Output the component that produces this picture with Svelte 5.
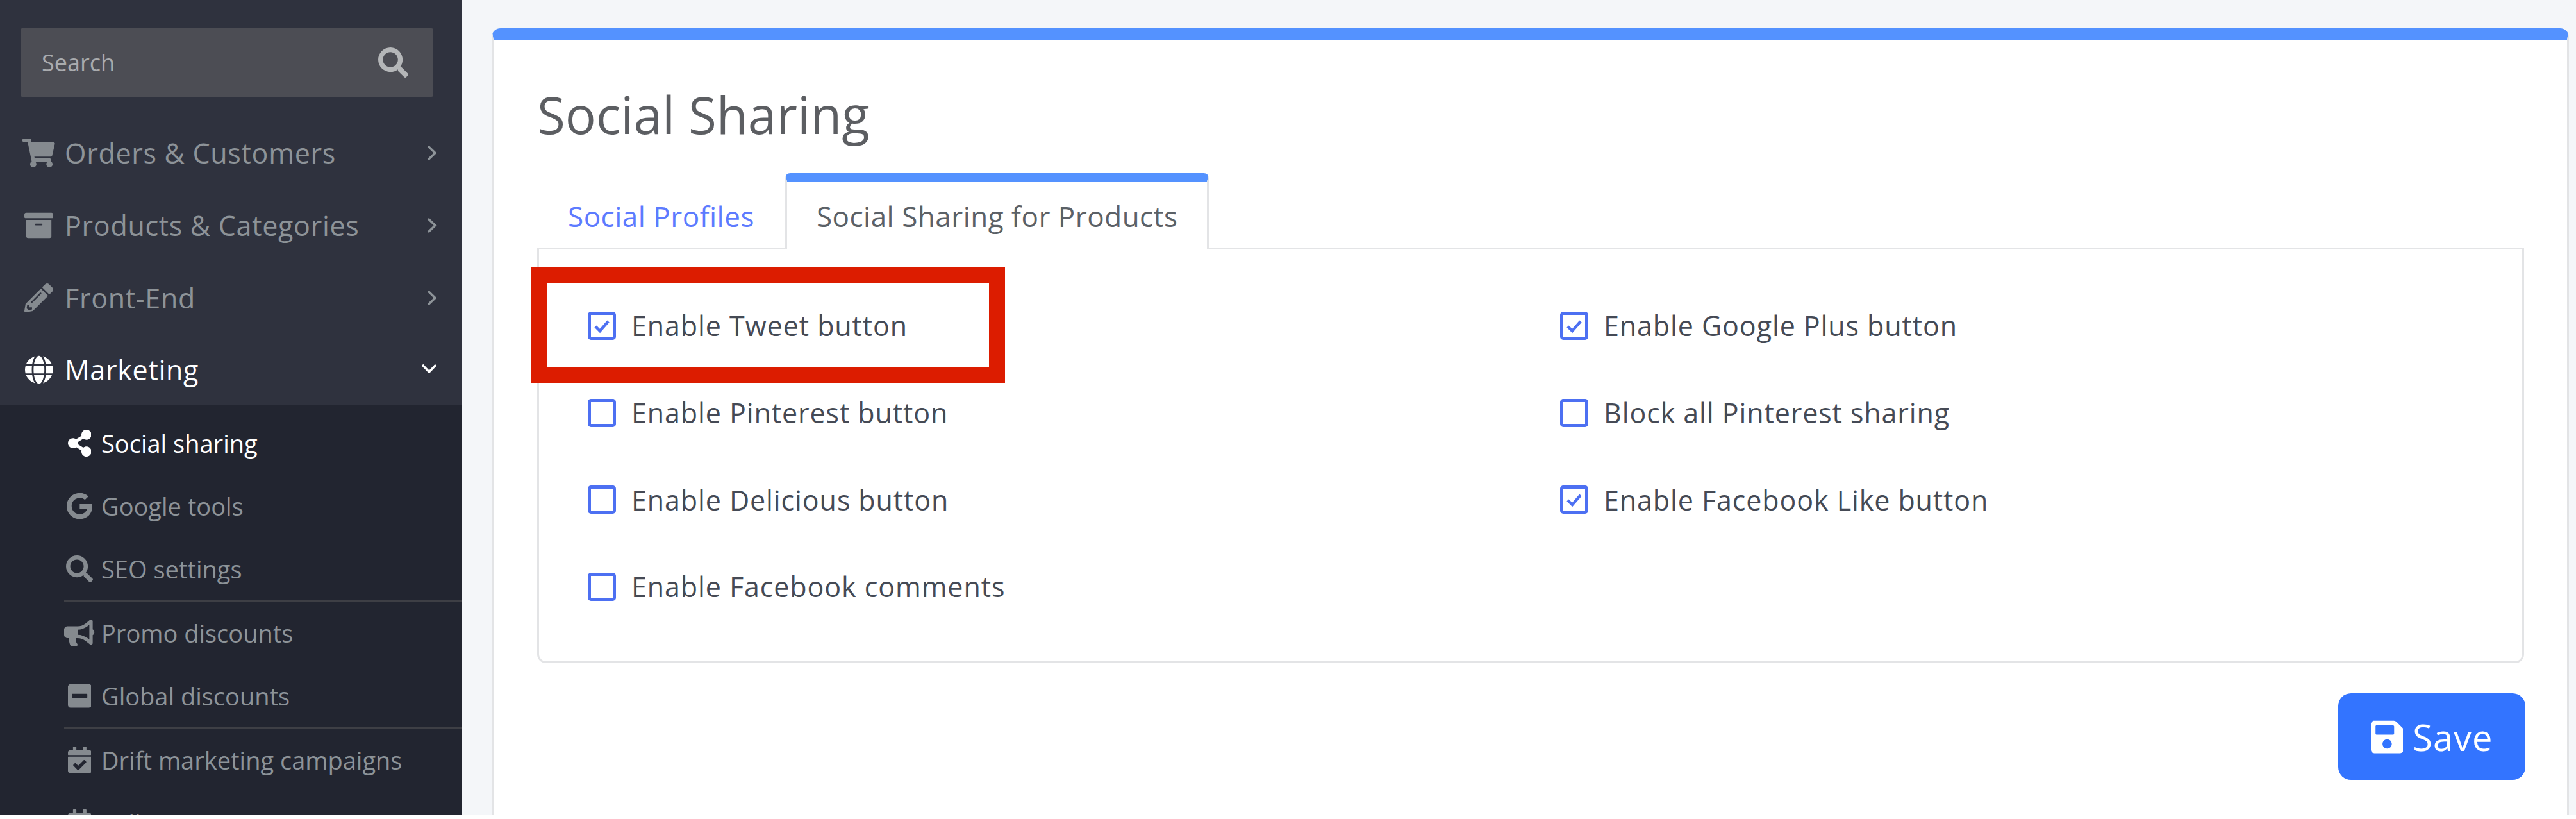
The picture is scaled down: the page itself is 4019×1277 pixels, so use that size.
<script>
  const icons = {
    search: [512, "M505 442.7L405.3 343c-4.5-4.5-10.6-7-17-7H372c27.6-35.3 44-79.7 44-128C416 93.1 322.9 0 208 0S0 93.1 0 208s93.1 208 208 208c48.3 0 92.7-16.4 128-44v16.3c0 6.4 2.5 12.5 7 17l99.7 99.7c9.4 9.4 24.6 9.4 33.9 0l28.3-28.3c9.4-9.4 9.4-24.6.1-34zM208 336c-70.7 0-128-57.2-128-128 0-70.7 57.2-128 128-128 70.7 0 128 57.2 128 128 0 70.7-57.2 128-128 128z"],
    cart: [576, "M528.12 301.319l47.273-208C578.806 78.301 567.391 64 551.99 64H159.208l-9.166-44.81C147.758 8.021 137.93 0 126.529 0H24C10.745 0 0 10.745 0 24v16c0 13.255 10.745 24 24 24h69.883l70.248 343.435C147.325 417.1 136 435.222 136 456c0 30.928 25.072 56 56 56s56-25.072 56-56c0-15.674-6.447-29.835-16.824-40h209.647C430.447 426.165 424 440.326 424 456c0 30.928 25.072 56 56 56s56-25.072 56-56c0-22.172-12.888-41.332-31.579-50.405l5.517-24.276c3.413-15.018-8.002-29.319-23.403-29.319H218.117l-6.545-32h293.145c11.206 0 20.92-7.754 23.403-18.681z"],
    archive: [512, "M32 448c0 17.7 14.3 32 32 32h384c17.7 0 32-14.3 32-32V160H32v288zm160-212c0-6.6 5.4-12 12-12h104c6.6 0 12 5.4 12 12v8c0 6.6-5.4 12-12 12H204c-6.6 0-12-5.4-12-12v-8zM480 32H32C14.3 32 0 46.3 0 64v48c0 8.8 7.2 16 16 16h480c8.8 0 16-7.2 16-16V64c0-17.7-14.3-32-32-32z"],
    pencil: [512, "M497.9 142.1l-46.1 46.1c-4.7 4.7-12.3 4.7-17 0l-111-111c-4.7-4.7-4.7-12.3 0-17l46.1-46.1c18.7-18.7 49.1-18.7 67.9 0l60.1 60.1c18.8 18.7 18.8 49.1 0 67.9zM284.2 99.8L21.6 362.4.4 483.9c-2.9 16.4 11.4 30.6 27.8 27.8l121.5-21.3 262.6-262.6c4.7-4.7 4.7-12.3 0-17l-111-111c-4.8-4.7-12.4-4.7-17.1 0zM124.1 339.9c-5.5-5.5-5.5-14.3 0-19.8l154-154c5.5-5.5 14.3-5.5 19.8 0s5.5 14.3 0 19.8l-154 154c-5.5 5.5-14.3 5.5-19.8 0zM88 424h48v36.3l-64.5 11.3-31.1-31.1L51.7 376H88v48z"],
    globe: [496, "M336.5 160C322 70.7 287.8 8 248 8s-74 62.7-88.5 152h177zM152 256c0 22.2 1.2 43.5 3.3 64h185.3c2.1-20.5 3.3-41.8 3.3-64s-1.2-43.5-3.3-64H155.3c-2.1 20.5-3.3 41.8-3.3 64zm324.7-96c-28.6-67.9-86.5-120.4-158-141.6 24.4 33.8 41.2 84.7 50 141.6h108zM177.2 18.4C105.8 39.6 47.8 92.1 19.3 160h108c8.7-56.9 25.5-107.8 49.9-141.6zM487.4 192H372.7c2.1 21 3.3 42.5 3.3 64s-1.2 43-3.3 64h114.6c5.5-20.5 8.6-41.8 8.6-64s-3.1-43.5-8.5-64zM120 256c0-21.5 1.2-43 3.3-64H8.6C3.2 212.5 0 233.8 0 256s3.2 43.5 8.6 64h114.6c-2-21-3.2-42.5-3.2-64zm39.5 96c14.5 89.3 48.7 152 88.5 152s74-62.7 88.5-152h-177zm159.3 141.6c71.4-21.2 129.4-73.7 158-141.6h-108c-8.8 56.9-25.6 107.8-50 141.6zM19.3 352c28.6 67.9 86.5 120.4 158 141.6-24.4-33.8-41.2-84.7-50-141.6h-108z"],
    share: [448, "M352 320c-22.608 0-43.387 7.819-59.79 20.895l-102.486-64.054a96.551 96.551 0 0 0 0-41.683l102.486-64.054C308.613 184.181 329.392 192 352 192c53.019 0 96-42.981 96-96S405.019 0 352 0s-96 42.981-96 96c0 7.158.79 14.13 2.276 20.841L155.79 180.895C139.387 167.819 118.608 160 96 160c-53.019 0-96 42.981-96 96s42.981 96 96 96c22.608 0 43.387-7.819 59.79-20.895l102.486 64.054A96.301 96.301 0 0 0 256 416c0 53.019 42.981 96 96 96s96-42.981 96-96-42.981-96-96-96z"],
    google: [488, "M488 261.8C488 403.3 391.1 504 248 504 110.8 504 0 393.2 0 256S110.8 8 248 8c66.8 0 123 24.5 166.3 64.9l-67.5 64.9C258.5 52.6 94.3 116.6 94.3 256c0 86.5 69.1 156.6 153.7 156.6 98.2 0 135-70.4 140.8-106.9H248v-85.3h236.1c2.3 12.7 3.9 24.9 3.9 41.4z"],
    bullhorn: [576, "M576 240c0-23.63-12.95-44.04-32-55.12V32.01C544 23.26 537.02 0 512 0c-7.12 0-14.19 2.38-19.98 7.02l-85.03 68.03C364.28 109.19 310.66 128 256 128H64c-35.35 0-64 28.65-64 64v96c0 35.35 28.65 64 64 64h33.7c-1.39 10.48-2.18 21.14-2.18 32 0 39.77 9.26 77.35 25.56 110.94 5.19 10.69 16.52 17.06 28.4 17.06h74.28c26.05 0 41.69-29.84 25.9-50.56-16.4-21.52-26.15-48.36-26.15-77.44 0-11.11 1.62-21.79 4.41-32H256c54.66 0 108.28 18.81 150.98 52.95l85.03 68.03a32.023 32.023 0 0 0 19.98 7.02c24.92 0 32-22.78 32-32V295.13C563.05 284.04 576 263.63 576 240zm-96 141.42l-33.05-26.44C392.95 311.78 325.12 288 256 288v-96c69.12 0 136.95-23.78 190.95-66.98L480 98.58v282.84z"],
    minus: [448, "M400 32H48C21.5 32 0 53.5 0 80v352c0 26.5 21.5 48 48 48h352c26.5 0 48-21.5 48-48V80c0-26.5-21.5-48-48-48zM92 296c-6.6 0-12-5.4-12-12v-56c0-6.6 5.4-12 12-12h264c6.6 0 12 5.4 12 12v56c0 6.6-5.4 12-12 12H92z"],
    calendar: [448, "M436 160H12c-6.627 0-12-5.373-12-12v-36c0-26.51 21.49-48 48-48h48V12c0-6.627 5.373-12 12-12h40c6.627 0 12 5.373 12 12v52h128V12c0-6.627 5.373-12 12-12h40c6.627 0 12 5.373 12 12v52h48c26.51 0 48 21.49 48 48v36c0 6.627-5.373 12-12 12zM12 192h424c6.627 0 12 5.373 12 12v260c0 26.51-21.49 48-48 48H48c-26.51 0-48-21.49-48-48V204c0-6.627 5.373-12 12-12zm333.296 95.947l-28.169-28.398c-4.667-4.705-12.265-4.736-16.97-.068L194.12 364.665l-45.98-46.352c-4.667-4.705-12.266-4.736-16.971-.068l-28.397 28.17c-4.705 4.667-4.736 12.265-.068 16.97l82.601 83.269c4.667 4.705 12.265 4.736 16.97.068l142.953-141.805c4.705-4.667 4.736-12.265.068-16.97z"],
    save: [448, "M433.941 129.941l-83.882-83.882A48 48 0 0 0 316.118 32H48C21.49 32 0 53.49 0 80v352c0 26.51 21.49 48 48 48h352c26.51 0 48-21.49 48-48V163.882a48 48 0 0 0-14.059-33.941zM224 416c-35.346 0-64-28.654-64-64 0-35.346 28.654-64 64-64s64 28.654 64 64c0 35.346-28.654 64-64 64zm96-304.52V212c0 6.627-5.373 12-12 12H76c-6.627 0-12-5.373-12-12V108c0-6.627 5.373-12 12-12h228.52c3.183 0 6.235 1.264 8.485 3.515l3.48 3.48A11.996 11.996 0 0 1 320 111.48z"]
  };

  const mainNav = [
    { label: 'Orders & Customers', icon: 'cart' },
    { label: 'Products & Categories', icon: 'archive' },
    { label: 'Front-End', icon: 'pencil' },
    { label: 'Marketing', icon: 'globe', open: true }
  ];

  const subNav = [
    { label: 'Social sharing', icon: 'share', active: true },
    { label: 'Google tools', icon: 'google' },
    { label: 'SEO settings', icon: 'search', divider: true },
    { label: 'Promo discounts', icon: 'bullhorn' },
    { label: 'Global discounts', icon: 'minus', divider: true },
    { label: 'Drift marketing campaigns', icon: 'calendar' },
    { label: 'Follow-up campaigns', icon: 'calendar' }
  ];

  const options = [
    { label: 'Enable Tweet button', checked: true },
    { label: 'Enable Google Plus button', checked: true },
    { label: 'Enable Pinterest button', checked: false },
    { label: 'Block all Pinterest sharing', checked: false },
    { label: 'Enable Delicious button', checked: false },
    { label: 'Enable Facebook Like button', checked: true },
    { label: 'Enable Facebook comments', checked: false }
  ];
</script>

{#snippet icon(name, cls)}
  <svg class={cls} viewBox="0 0 {icons[name][0]} 512" aria-hidden="true"><path d={icons[name][1]} /></svg>
{/snippet}

<div class="page">
  <aside class="sidebar">
    <div class="search">
      <span>Search</span>
      {@render icon('search', 'search-icon')}
    </div>

    <nav class="main-nav">
      {#each mainNav as item}
        <a class="main-item" class:open={item.open} href="#top">
          <span class="main-icon">{@render icon(item.icon, 'glyph')}</span>
          <span class="main-label">{item.label}</span>
          {#if item.open}
            <svg class="chevron down" viewBox="0 0 25 18" aria-hidden="true"><path d="M2 3l10.500 11L23 3" /></svg>
          {:else}
            <svg class="chevron" viewBox="0 0 17 25" aria-hidden="true"><path d="M3 2l11 10.500L3 23" /></svg>
          {/if}
        </a>
      {/each}
    </nav>

    <nav class="sub-nav">
      {#each subNav as item}
        <a class="sub-item" class:active={item.active} class:divider={item.divider} href="#top">
          <span class="sub-icon">{@render icon(item.icon, 'glyph')}</span>
          <span>{item.label}</span>
        </a>
      {/each}
    </nav>
  </aside>

  <main class="content">
    <section class="card">
      <h1>Social Sharing</h1>

      <div class="tabs">
        <a class="tab" href="#top">Social Profiles</a>
        <a class="tab active" href="#top">Social Sharing for Products</a>
      </div>

      <div class="pane">
        <div class="options">
          {#each options as opt}
            <div class="option">
              <span class="box">
                {#if opt.checked}
                  <svg viewBox="0 0 34 34" aria-hidden="true"><path d="M7 18l7 7L27 10" /></svg>
                {/if}
              </span>
              <span>{opt.label}</span>
            </div>
          {/each}
        </div>
        <div class="highlight"></div>
      </div>

      <div class="actions">
        <button class="save" type="button">
          {@render icon('save', 'save-icon')}
          <span>Save</span>
        </button>
      </div>
    </section>
  </main>
</div>

<style>
  :global(body) {
    margin: 0;
    background: #fff;
  }

  .page {
    display: flex;
    width: 4019px;
    height: 1271px;
    overflow: hidden;
    font-family: "Open Sans", "Lato", sans-serif;
  }

  a {
    text-decoration: none;
  }

  .sidebar {
    flex: 0 0 721px;
    display: flex;
    flex-direction: column;
    background: #2f323e;
    padding-top: 44px;
    overflow: hidden;
    box-sizing: border-box;
  }

  .search {
    display: flex;
    align-items: center;
    justify-content: space-between;
    height: 107px;
    margin: 0 45px 31px 32px;
    padding: 0 39px 0 33px;
    background: #4c4d54;
    border-radius: 3px;
    font-size: 36px;
    color: #a9abae;
    flex: none;
  }

  .search-icon {
    width: 47px;
    height: 47px;
    fill: #b4b6b8;
  }

  .main-nav {
    flex: none;
  }

  .main-item {
    display: flex;
    align-items: center;
    height: 113px;
    padding: 0 39px 0 35px;
    font-size: 43px;
    letter-spacing: 0.7px;
    color: #8d9398;
  }

  .main-item.open {
    color: #fff;
    height: 111px;
  }

  .main-icon {
    width: 51px;
    flex: none;
    display: flex;
    justify-content: center;
    margin-right: 15px;
  }

  .main-icon :global(.glyph) {
    height: 45px;
    fill: #858a8f;
  }

  .main-item.open .main-icon :global(.glyph) {
    fill: #fff;
  }

  .main-label {
    flex: 1;
  }

  .chevron {
    width: 17px;
    height: 25px;
    fill: none;
    stroke: #8d9398;
    stroke-width: 3.5;
  }

  .chevron.down {
    width: 25px;
    height: 18px;
    margin-top: -4px;
    stroke: #fff;
  }

  .sub-nav {
    flex: 1;
    background: #222530;
    padding-top: 10px;
    padding-left: 100px;
  }

  .sub-item {
    display: flex;
    align-items: center;
    height: 98px;
    font-size: 38px;
    color: #8d9398;
  }

  .sub-item.divider {
    border-bottom: 2px solid #3e3f45;
  }

  .sub-item.active {
    color: #fff;
  }

  .sub-icon {
    width: 48px;
    flex: none;
    display: flex;
    justify-content: center;
    margin-right: 10px;
  }

  .sub-icon :global(.glyph) {
    height: 42px;
    fill: #858a8f;
  }

  .sub-item.active .sub-icon :global(.glyph) {
    fill: #fff;
  }

  .content {
    flex: 1;
    background: #f4f6f9;
    padding: 44px 11px 0 46px;
    box-sizing: border-box;
  }

  .card {
    height: 100%;
    box-sizing: border-box;
    background: #fff;
    border: solid #e3e4e6;
    border-width: 19px 3px 0;
    border-top-color: #5492ff;
    border-radius: 14px 14px 0 0;
    padding: 70px 67px 0 68px;
  }

  h1 {
    margin: 0 0 47px;
    font-size: 80px;
    line-height: 90px;
    font-weight: 400;
    color: #5c5e62;
  }

  .tabs {
    display: flex;
    height: 119px;
    margin-bottom: -3px;
    position: relative;
    z-index: 1;
  }

  .tab {
    display: flex;
    align-items: center;
    padding: 14px 48px 0;
    font-size: 44px;
    letter-spacing: 0.5px;
    color: #5d7bff;
    box-sizing: border-box;
  }

  .tab.active {
    background: #fff;
    color: #5b6167;
    border: solid #e3e4e6;
    border-width: 14px 3px 0;
    border-top-color: #5492ff;
    border-radius: 8px 8px 0 0;
    padding: 0 46px;
  }

  .pane {
    position: relative;
    height: 648px;
    box-sizing: border-box;
    border: 3px solid #e3e4e6;
    border-radius: 0 0 14px 14px;
    padding: 51px 0 0 76px;
  }

  .options {
    display: grid;
    grid-template-columns: 1517px 1fr;
    grid-auto-rows: 135.7px;
  }

  .option {
    display: flex;
    align-items: center;
    gap: 24px;
    font-size: 43px;
    letter-spacing: 0.9px;
    color: #454a55;
  }

  .box {
    width: 44px;
    height: 44px;
    flex: none;
    box-sizing: border-box;
    border: 5px solid #4d70f2;
    border-radius: 5px;
    display: flex;
  }

  .box svg {
    width: 100%;
    height: 100%;
    fill: none;
    stroke: #4d70f2;
    stroke-width: 4.5;
  }

  .highlight {
    position: absolute;
    left: -12px;
    top: 28px;
    width: 739px;
    height: 180px;
    box-sizing: border-box;
    border: 25px solid #dc1c00;
  }

  .actions {
    display: flex;
    justify-content: flex-end;
    margin: 47px -2px 0 0;
  }

  .save {
    display: flex;
    align-items: center;
    justify-content: center;
    gap: 15px;
    width: 292px;
    height: 135px;
    border: 0;
    border-radius: 20px;
    background: #3374ff;
    color: #fff;
    font: inherit;
    font-size: 56px;
    letter-spacing: 1px;
  }

  .save-icon {
    height: 58px;
    fill: #fff;
  }
</style>
